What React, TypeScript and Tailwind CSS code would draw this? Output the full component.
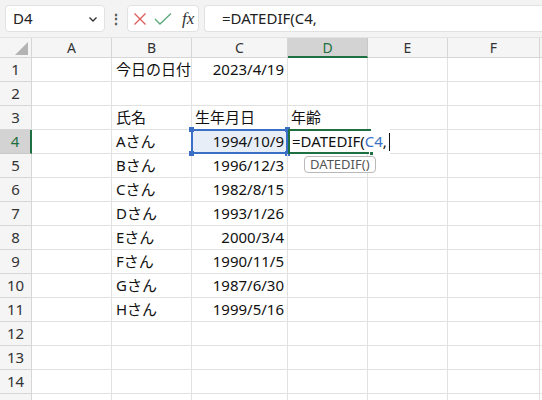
import React from "react";

const cols = [
  { id: "A", w: "w-[80px]" },
  { id: "B", w: "w-[80px]" },
  { id: "C", w: "w-[96px]" },
  { id: "D", w: "w-[80px]" },
  { id: "E", w: "w-[80px]" },
  { id: "F", w: "w-[92px]" },
];

const rows: Record<number, { b?: string; c?: string; d?: string }> = {
  1: { b: "今日の日付", c: "2023/4/19" },
  3: { b: "氏名", c: "生年月日", d: "年齢" },
  4: { b: "Aさん", c: "1994/10/9" },
  5: { b: "Bさん", c: "1996/12/3" },
  6: { b: "Cさん", c: "1982/8/15" },
  7: { b: "Dさん", c: "1993/1/26" },
  8: { b: "Eさん", c: "2000/3/4" },
  9: { b: "Fさん", c: "1990/11/5" },
  10: { b: "Gさん", c: "1987/6/30" },
  11: { b: "Hさん", c: "1999/5/16" },
};

const font = { fontFamily: '"Noto Sans", "Noto Sans CJK JP", sans-serif' };

function Toolbar() {
  return (
    <div className="h-[38px] bg-[#f3f3f3] flex items-center pl-[5px] gap-[5px] border-b border-[#e3e3e3] overflow-hidden">
      <div className="w-[100px] h-[27px] bg-white rounded-[4px] border border-[#e2e2e2] flex items-center justify-between pl-[7px] pr-[5px] text-[15px] text-[#222]">
        <span>D4</span>
        <svg width="12" height="12" viewBox="0 0 12 12">
          <path d="M2.5 4.5 L6 8 L9.5 4.5" fill="none" stroke="#333" strokeWidth="1.4" />
        </svg>
      </div>
      <div className="w-[12px] flex justify-center text-[#555] text-[14px] font-bold">⋮</div>
      <div className="w-[72px] h-[27px] bg-white rounded-[4px] border border-[#e2e2e2] flex items-center pl-[5px] gap-[7px]">
        <svg width="14" height="14" viewBox="0 0 14 14">
          <path d="M1.5 1.5 L12.5 12.5 M12.5 1.5 L1.5 12.5" stroke="#dd5c5c" strokeWidth="1.3" fill="none" />
        </svg>
        <svg width="18" height="14" viewBox="0 0 18 14">
          <path d="M1 7 L6 12 L17 1.5" stroke="#5aa878" strokeWidth="1.3" fill="none" />
        </svg>
        <span className="ml-[3px] text-[17px] italic text-[#333]" style={{ fontFamily: '"Liberation Serif", serif' }}>
          fx
        </span>
      </div>
      <div className="flex-1 h-[27px] bg-white rounded-l-[4px] border border-r-0 border-[#e2e2e2] flex items-center pl-[17px] text-[15px] text-[#222]">
        =DATEDIF(C4,
      </div>
    </div>
  );
}

function HeaderRow() {
  return (
    <div className="flex h-[20px] bg-[#f5f5f5]">
      <div className="w-[32px] border-r border-b border-[#d6d6d6] relative">
        <svg className="absolute right-[3px] bottom-[2px]" width="13" height="13" viewBox="0 0 13 13">
          <path d="M13 0 L13 13 L0 13 Z" fill="#b4b4b4" />
        </svg>
      </div>
      {cols.map((c) =>
        c.id === "D" ? (
          <div
            key={c.id}
            className={`${c.w} bg-[#d3d3d3] border-r border-[#c8c8c8] border-b-2 border-b-[#1e6f42] flex items-center justify-center text-[14px] text-[#1e6f42]`}
          >
            {c.id}
          </div>
        ) : (
          <div
            key={c.id}
            className={`${c.w} border-r border-b border-[#d6d6d6] flex items-center justify-center text-[14px] text-[#333]`}
          >
            {c.id}
          </div>
        )
      )}
      <div className="flex-1 border-b border-[#d6d6d6]" />
    </div>
  );
}

function Handle({ pos }: { pos: string }) {
  return <div className={`absolute w-[5px] h-[5px] bg-[#3b6fc5] ${pos}`} />;
}

function Row({ n }: { n: number }) {
  const r = rows[n] || {};
  const active = n === 4;
  return (
    <div className="flex h-[24px]">
      <div
        className={
          active
            ? "w-[32px] bg-[#d3d3d3] border-r-2 border-r-[#1e6f42] border-b border-[#c8c8c8] flex items-center justify-center text-[15px] text-[#1e6f42]"
            : "w-[32px] bg-[#f5f5f5] border-r border-b border-[#d6d6d6] flex items-center justify-center text-[15px] text-[#333]"
        }
      >
        {n < 15 ? n : ""}
      </div>
      <div className="w-[80px] border-r border-b border-[#e1e1e1]" />
      <div className="w-[80px] border-r border-b border-[#e1e1e1] flex items-center px-[4px] text-[15px] text-[#111] whitespace-nowrap">
        {r.b}
      </div>
      <div
        className={`w-[96px] border-r border-b border-[#e1e1e1] flex items-center px-[3px] text-[15px] text-[#111] whitespace-nowrap relative ${
          n === 3 ? "justify-start" : "justify-end"
        } ${active ? "bg-[#e8eef8]" : ""}`}
      >
        {active && (
          <>
            <div className="absolute left-[-1px] top-[-1px] right-[-1px] bottom-[-1px] border-2 border-[#3b6fc5]" />
            <Handle pos="left-[-3px] top-[-3px]" />
            <Handle pos="right-[-3px] top-[-3px]" />
            <Handle pos="left-[-3px] bottom-[-3px]" />
            <Handle pos="right-[-3px] bottom-[-3px]" />
          </>
        )}
        <span className="relative">{r.c}</span>
      </div>
      <div className="w-[80px] border-r border-b border-[#e1e1e1] flex items-center px-[3px] text-[15px] text-[#111] whitespace-nowrap relative">
        {active ? (
          <>
            <div className="absolute left-[1px] top-[-1px] w-[101px] h-[25px] bg-white z-10 flex items-center pl-[3px] text-[15px] text-[#111]">
              <span>=DATEDIF(</span>
              <span className="text-[#3b6fc5]">C4</span>
              <span>,</span>
              <span className="ml-[2px] w-[1px] h-[18px] bg-[#111]" />
            </div>
            <div className="absolute left-[0px] top-[-1px] w-[83px] h-[2px] bg-[#1e6f42] z-20" />
            <div className="absolute left-[0px] top-[-1px] w-[2px] h-[25px] bg-[#1e6f42] z-20" />
            <div className="absolute left-[0px] bottom-[-1px] w-[83px] h-[2px] bg-[#1e6f42] z-20" />
            <div className="absolute left-[81px] bottom-[-3px] w-[5px] h-[5px] bg-[#1e6f42] border border-white z-20" />
            <div className="absolute left-[16px] top-[26px] h-[17px] px-[5px] bg-white border border-[#b9b9b9] rounded-[4px] flex items-center text-[13px] text-[#555] z-30">
              DATEDIF()
            </div>
          </>
        ) : (
          r.d
        )}
      </div>
      <div className="w-[80px] border-r border-b border-[#e1e1e1]" />
      <div className="w-[92px] border-r border-b border-[#e1e1e1]" />
      <div className="flex-1 border-b border-[#e1e1e1]" />
    </div>
  );
}

export default function App() {
  return (
    <div className="w-[542px] h-[400px] overflow-hidden bg-white" style={font}>
      <Toolbar />
      <HeaderRow />
      {Array.from({ length: 15 }, (_, i) => (
        <Row key={i + 1} n={i + 1} />
      ))}
    </div>
  );
}
